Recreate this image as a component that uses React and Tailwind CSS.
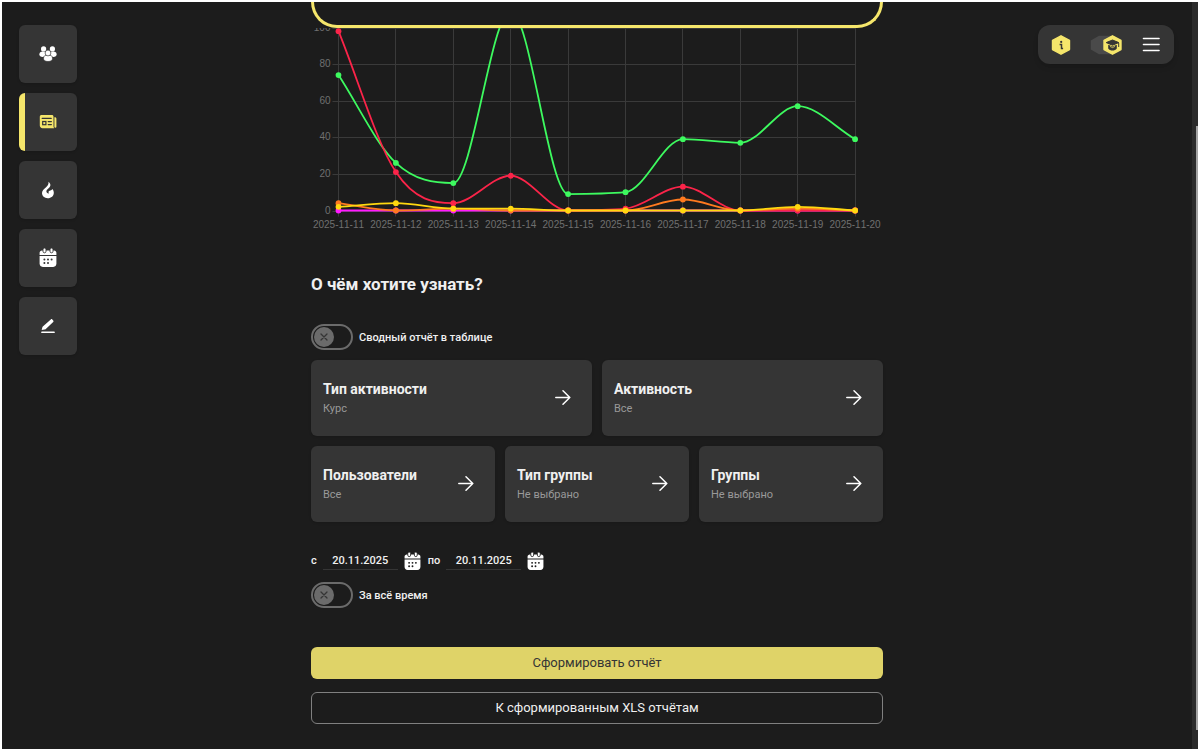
import React, { useState } from 'react';

const DATES = [
  '2025-11-11', '2025-11-12', '2025-11-13', '2025-11-14', '2025-11-15',
  '2025-11-16', '2025-11-17', '2025-11-18', '2025-11-19', '2025-11-20',
];

const SERIES = [
  { name: 'magenta', color: '#ff1aff', values: [0, 0, 0, 0, 0, 0, 0, 0, 0, 0] },
  { name: 'green', color: '#3dfa5f', values: [74, 26, 15, 109, 9, 10, 39, 37, 57, 39] },
  { name: 'red', color: '#fb2449', values: [98, 21, 4, 19, 0, 1, 13, 0, 0, 0] },
  { name: 'orange', color: '#ff7a1f', values: [4, 0, 1, 0, 0, 0, 6, 0, 1, 0] },
  { name: 'yellow', color: '#ffd80f', values: [2, 4, 1, 1, 0, 0, 0, 0, 2, 0] },
];

const LEFT = 27.5;
const STEP = 57.4;
const BASE = 182.5;
const UNIT = 1.83;

const px = (i) => LEFT + i * STEP;
const py = (v) => BASE - v * UNIT;

// monotone cubic interpolation, so the curve never overshoots a point
function curve(values) {
  const n = values.length;
  const d = [];
  for (let i = 0; i < n - 1; i++) d.push(values[i + 1] - values[i]);
  const m = values.map((_, i) => {
    if (i === 0) return d[0];
    if (i === n - 1) return d[n - 2];
    return d[i - 1] * d[i] <= 0 ? 0 : (d[i - 1] + d[i]) / 2;
  });
  for (let i = 0; i < n - 1; i++) {
    if (d[i] === 0) {
      m[i] = 0;
      m[i + 1] = 0;
      continue;
    }
    const a = m[i] / d[i];
    const b = m[i + 1] / d[i];
    const s = a * a + b * b;
    if (s > 9) {
      const t = 3 / Math.sqrt(s);
      m[i] = a * t * d[i];
      m[i + 1] = b * t * d[i];
    }
  }
  let path = `M${px(0)} ${py(values[0])}`;
  for (let i = 0; i < n - 1; i++) {
    path += ` C${px(i) + STEP / 3} ${py(values[i] + m[i] / 3)} ${px(i + 1) - STEP / 3} ${py(values[i + 1] - m[i + 1] / 3)} ${px(i + 1)} ${py(values[i + 1])}`;
  }
  return path;
}

function ActivityChart() {
  return (
    <svg
      viewBox="0 0 572 204"
      className="block w-full overflow-hidden font-['Liberation_Sans',sans-serif] [font-kerning:none]"
      role="img"
      aria-label="Активность"
    >
      {[0, 20, 40, 60, 80, 100].map((v) => (
        <g key={v}>
          <line x1={LEFT - 6} x2={px(9)} y1={Math.round(py(v)) + 0.5} y2={Math.round(py(v)) + 0.5} stroke="#3a3a3a" />
          <text x={LEFT - 8} y={py(v) + 3} textAnchor="end" fontSize="10" fill="#707070">
            {v}
          </text>
        </g>
      ))}
      {DATES.map((date, i) => (
        <g key={date}>
          <line x1={Math.round(px(i) - 0.5) + 0.5} x2={Math.round(px(i) - 0.5) + 0.5} y1="0" y2={BASE + 6} stroke="#3a3a3a" />
          <text x={px(i)} y="200" textAnchor="middle" fontSize="10" fill="#707070">
            {date}
          </text>
        </g>
      ))}
      {SERIES.map((s) => (
        <g key={s.name}>
          <path d={curve(s.values)} fill="none" stroke={s.color} strokeWidth="1.8" />
          {s.values.map((v, i) => (
            <circle key={i} cx={px(i)} cy={py(v)} r="2.9" fill={s.color} />
          ))}
        </g>
      ))}
    </svg>
  );
}

function PeopleIcon() {
  return (
    <svg viewBox="0 0 18 18" className="size-[18px]" fill="currentColor">
      <circle cx="4.6" cy="3.9" r="2.6" />
      <circle cx="13.4" cy="3.9" r="2.6" />
      <ellipse cx="3.8" cy="9.2" rx="3.4" ry="2.7" />
      <ellipse cx="14.2" cy="9.2" rx="3.4" ry="2.7" />
      <g stroke="#353535" strokeWidth="0.7">
        <ellipse cx="9" cy="13.2" rx="4.5" ry="3.3" />
        <circle cx="9" cy="8" r="2.9" />
      </g>
    </svg>
  );
}

function NewsIcon() {
  return (
    <svg viewBox="0 0 18 18" className="size-[18px]" fill="currentColor">
      <path d="M2.6 2h10.2c1 0 1.7.7 1.7 1.7V13c0 .9.2 1.6.7 2.2H3.4C1.9 15.2.8 14.1.8 12.6V3.7C.8 2.7 1.6 2 2.6 2Z" />
      <path d="M15.4 4.2h.5c.9 0 1.5.6 1.5 1.5v8a1 1 0 0 1-2 0Z" />
      <path d="M3.2 5.4h9M9.2 8.6h3.2M9.2 11.6h3.200" stroke="#353535" strokeWidth="1.2" strokeLinecap="round" fill="none" />
      <rect x="3.7" y="8.5" width="3.2" height="3.2" stroke="#353535" strokeWidth="1.2" />
    </svg>
  );
}

function FlameIcon() {
  return (
    <svg viewBox="0 0 18 18" className="size-[18px]" fill="currentColor">
      <path d="M9.5.8c.4 2.4-.9 4-2.7 5.800C4.9 8.400 3 9.900 3 12.100c0 3 2.500 5.200 5.700 5.200 3.500 0 6.100-2.300 6.100-5.500 0-1.500-.4-2.700-1.400-3.900-.5.8-1.100 1.300-2 1.500-1 .2-1.900.6-1.900 1.700 0 .6.2 1 .5 1.300-1.700.1-2.700-.9-2.600-2.200.1-1.600 1.900-2.400 3.200-3.900C12.200 4.500 11.300 2.200 9.500.8Z" />
    </svg>
  );
}

function CalendarIcon({ hole = '#353535', className = 'size-[18px] overflow-visible' }) {
  return (
    <svg viewBox="0 0 18 18" className={className} fill="currentColor">
      <path d="M3 1.600h12c1.400 0 2.400 1 2.400 2.400v1.900H.6V4C.6 2.600 1.600 1.600 3 1.600Z" />
      <path d="M.6 6.900h16.800v7.700c0 2-1.200 3.300-3.200 3.300H3.800c-2 0-3.200-1.300-3.200-3.300Z" />
      <g stroke={hole} strokeWidth="0.9">
        <rect x="4" y="-1" width="3" height="4.800" rx="1.5" />
        <rect x="11" y="-1" width="3" height="4.800" rx="1.5" />
      </g>
      <g fill={hole}>
        <circle cx="5.4" cy="10.4" r="1" />
        <circle cx="9" cy="10.4" r="1" />
        <circle cx="12.6" cy="10.4" r="1" />
        <circle cx="5.4" cy="14" r="1" />
        <circle cx="9" cy="14" r="1" />
      </g>
    </svg>
  );
}

function PencilIcon() {
  return (
    <svg viewBox="0 0 18 18" className="size-[18px]" fill="currentColor">
      <path d="M11.8 2.400c.5-.4 1-.4 1.500.1l.9 1c.5.500.5 1 0 1.500l-7.400 6.900c-.4.400-.9.600-1.400.7l-2.700.5.600-2.500c.1-.5.400-1 .8-1.300Z" />
      <rect x="2.2" y="14.6" width="13.6" height="1.5" rx=".7" />
    </svg>
  );
}

function ArrowIcon() {
  return (
    <svg viewBox="0 0 16 16" className="size-4 shrink-0" fill="none" stroke="white" strokeWidth="1.5" strokeLinecap="round" strokeLinejoin="round">
      <path d="M.8 7.500h14M8 .8l6.800 6.700L8 14.200" />
    </svg>
  );
}

const NAV = [
  { label: 'Пользователи', icon: <PeopleIcon /> },
  { label: 'Отчёты', icon: <NewsIcon />, active: true },
  { label: 'Активность', icon: <FlameIcon /> },
  { label: 'Календарь', icon: <CalendarIcon /> },
  { label: 'Редактор', icon: <PencilIcon /> },
];

function SideNav() {
  return (
    <nav className="flex flex-col items-start gap-[10px] pt-[23px] pl-[17px]">
      {NAV.map((item) => (
        <button
          key={item.label}
          aria-label={item.label}
          className={
            item.active
              ? 'flex size-[58px] items-center justify-center rounded-md border-l-[6px] border-[#f5e66b] bg-[#353535] pr-[6px] text-[#f5e66b] shadow'
              : 'flex size-[58px] items-center justify-center rounded-md bg-[#353535] text-white shadow'
          }
        >
          {item.icon}
        </button>
      ))}
    </nav>
  );
}

function TopTools() {
  return (
    <div className="mt-[23px] mr-[18px] flex h-[39px] w-[136px] items-center justify-between justify-self-end rounded-xl bg-[#353535] px-[13px] shadow-md">
      <button aria-label="Информация">
        <svg viewBox="0 0 20 20" className="size-5">
          <path d="M10 .8 18.500 5.400v9.200L10 19.200 1.500 14.600V5.400Z" fill="#f5e66b" stroke="#f5e66b" strokeWidth="1.400" strokeLinejoin="round" />
          <circle cx="10.200" cy="6.900" r="1.100" fill="#353535" />
          <path d="M8.600 9.400h1.900v4.300M9.800 13.500h2.300" fill="none" stroke="#353535" strokeWidth="1.500" />
        </svg>
      </button>
      <button role="switch" aria-checked="true" aria-label="Режим обучения">
        <svg viewBox="0 0 33 20" className="h-5 w-[33px]">
          <path d="M9 .8h14v18.400H9L.8 14.600V5.400Z" fill="#4a4a4a" />
          <path d="M22.500.8 31 5.400v9.200l-8.500 4.600L14 14.600V5.400Z" fill="#f5e66b" stroke="#f5e66b" strokeWidth="1.400" strokeLinejoin="round" />
          <path d="M16.200 7.600 22.500 5l6.300 2.600-6.300 2.600Z" fill="#353535" stroke="#353535" strokeLinejoin="round" />
          <path d="M18.200 9.700 22.500 11.400l4.300-1.700v3.900c-1 1.400-2.500 2-4.300 2s-3.300-.6-4.300-2Z" fill="#353535" />
          <path d="M20 11.400 22.500 12.600 25 11.400" fill="none" stroke="#f5e66b" strokeWidth=".7" />
          <path d="M28.700 8v4" stroke="#353535" />
        </svg>
      </button>
      <button aria-label="Меню">
        <svg viewBox="0 0 20 20" className="size-5">
          <path d="M2.500 3.500h15.500M2.500 9.500h15.500M2.500 15.500h15.500" stroke="white" strokeWidth="1.600" strokeLinecap="round" />
        </svg>
      </button>
    </div>
  );
}

function Toggle({ id, label }) {
  const [on, setOn] = useState(false);
  return (
    <div className="flex h-[26px] items-center gap-[6px]">
      <div
        className={
          on
            ? 'relative flex h-[26px] w-[42px] items-center justify-end rounded-full border-2 border-[#f5e66b] px-px'
            : 'relative flex h-[26px] w-[42px] items-center rounded-full border-2 border-[#6b6b6b] px-px'
        }
      >
        <input
          id={id}
          type="checkbox"
          checked={on}
          onChange={(e) => setOn(e.target.checked)}
          className="absolute inset-0 cursor-pointer appearance-none rounded-full"
        />
        <span className="pointer-events-none flex size-5 items-center justify-center rounded-full bg-[#6b6b6b]">
          <svg viewBox="0 0 8 8" className="size-2" stroke="#353535" strokeWidth="1.300" strokeLinecap="round">
            <path d="M1 1l6 6M7 1 1 7" />
          </svg>
        </span>
      </div>
      <label htmlFor={id} className="pt-[2px] text-[11px] font-medium">{label}</label>
    </div>
  );
}

function FilterCard({ title, value }) {
  return (
    <button className="flex h-[76px] items-center justify-between rounded-md bg-[#353535] pr-[21px] pl-3 text-left shadow">
      <span className="flex flex-col pt-[2px]">
        <span className="text-sm leading-5 font-bold">{title}</span>
        <span className="text-[11px] leading-5 text-[#999999]">{value}</span>
      </span>
      <ArrowIcon />
    </button>
  );
}

function DateField({ id, label }) {
  const [value, setValue] = useState('20.11.2025');
  return (
    <div className="flex items-center gap-[6px]">
      <label htmlFor={id} className="text-[11px] font-medium">{label}</label>
      <input
        id={id}
        value={value}
        onChange={(e) => setValue(e.target.value)}
        className="h-[18px] w-[75px] border-b border-[#353535] bg-transparent text-center text-[11px] font-medium outline-none"
      />
      <button aria-label="Открыть календарь" className="text-white">
        <CalendarIcon hole="#1c1c1c" className="size-[17px] overflow-visible" />
      </button>
    </div>
  );
}

function App() {
  return (
    <div className="flex min-h-screen bg-white p-[2px] font-['Roboto',sans-serif] text-[#f0f0f0]">
      <div className="grid flex-1 grid-cols-[1fr_minmax(0,572px)_1fr] items-start bg-[#1c1c1c]">
        <SideNav />
        <main>
          <div className="h-[26px] rounded-b-[28px] border-x-[3px] border-b-[3px] border-[#f5e66b]" />
          <ActivityChart />
          <h2 className="mt-10 text-[17px] leading-6 font-bold">О чём хотите узнать?</h2>
          <div className="mt-7">
            <Toggle id="summary" label="Сводный отчёт в таблице" />
          </div>
          <div className="mt-[10px] grid grid-cols-2 gap-[10px]">
            <FilterCard title="Тип активности" value="Курс" />
            <FilterCard title="Активность" value="Все" />
          </div>
          <div className="mt-[10px] grid grid-cols-3 gap-[10px]">
            <FilterCard title="Пользователи" value="Все" />
            <FilterCard title="Тип группы" value="Не выбрано" />
            <FilterCard title="Группы" value="Не выбрано" />
          </div>
          <div className="mt-7 flex h-[22px] items-center gap-[7px]">
            <DateField id="from" label="с" />
            <DateField id="to" label="по" />
          </div>
          <div className="mt-[10px]">
            <Toggle id="all-time" label="За всё время" />
          </div>
          <div className="mt-[39px] mb-6 flex flex-col gap-[13px]">
            <button className="h-8 rounded-md bg-[#dfd368] text-[13px] text-[#353535]">Сформировать отчёт</button>
            <button className="h-8 rounded-md border border-[#808080] text-[13px]">К сформированным XLS отчётам</button>
          </div>
        </main>
        <TopTools />
      </div>
      {/* page scroll track */}
      <div className="flex w-[6px] flex-col items-end bg-[#2b2b2b] pt-[124px] pb-[19px]">
        <div className="w-[2px] flex-1 bg-[#a3a3a3]" />
      </div>
    </div>
  );
}

export default App;
